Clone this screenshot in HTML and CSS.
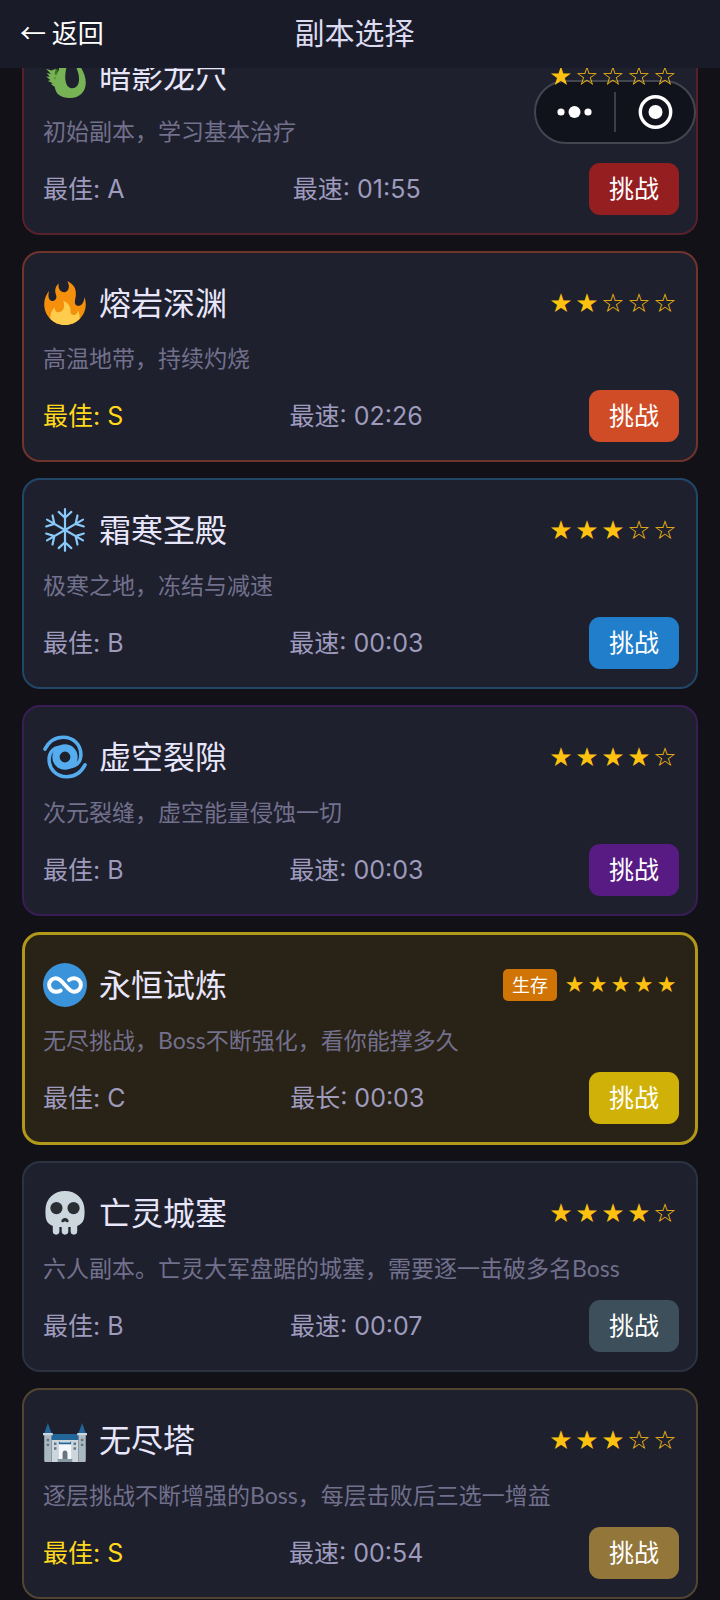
FILE: index.html
```html
<!DOCTYPE html>
<html lang="zh-CN">
<head>
<meta charset="utf-8">
<meta name="viewport" content="width=device-width, initial-scale=1">
<title>副本选择</title>
<link rel="stylesheet" href="styles.css">
</head>
<body>
<header class="topbar">
  <button class="back" type="button">← 返回</button>
  <h1 class="topbar-title">副本选择</h1>
</header>

<div class="capsule">
  <button class="capsule-btn" type="button" aria-label="更多">
    <svg width="36" height="36" viewBox="0 0 36 36" fill="#fff"><circle cx="4" cy="18" r="3.6"/><circle cx="17.500" cy="18" r="6"/><circle cx="31" cy="18" r="3.6"/></svg>
  </button>
  <button class="capsule-btn" type="button" aria-label="关闭">
    <svg width="36" height="36" viewBox="0 0 36 36"><circle cx="18.500" cy="18" r="15.2" fill="none" stroke="#fff" stroke-width="3.4"/><circle cx="18.500" cy="18" r="7" fill="#fff"/></svg>
  </button>
</div>

<main class="list">
  <article class="card card-dragon">
    <div class="head">
      <svg class="icon" viewBox="0 0 36 36"><path fill="#3e721d" d="M7 14l5-2v14l-4-2-3-4z"/><path fill="#77b255" d="M2.500 12l4.500 1.500 3.500-1.500-1 4 1.500 2-2 2 2 2-1.500 5-3-2.500 1.500-.5-4-2 2-.8-3.500-2.700 3 .2-2.500-3.200 3.500.8z"/><path fill="#77b255" d="M13 5v8c-2.500 4-4 8.500-3.500 13 .6 7 5 10 12.500 10 8 0 13-5 13-12.500 0-4.500-1.500-8.500-4-12.500l-2-6z"/><path fill="#1e202e" d="M20 8c-1.200 4-2.300 10-1.500 14 .7 4 2.800 6 5.500 6 3.800 0 5.500-3.500 5.500-7.500 0-5-2-8.500-3.500-12.500z"/></svg>
      <h2 class="name">暗影龙穴</h2>
      <div class="stars"><span>★</span><span>☆</span><span>☆</span><span>☆</span><span>☆</span></div>
    </div>
    <p class="desc">初始副本，学习基本治疗</p>
    <div class="foot"><span>最佳: A</span><span>最速: 01:55</span><button class="go" type="button">挑战</button></div>
  </article>

  <article class="card card-lava">
    <div class="head">
      <svg class="icon" viewBox="0 0 36 36"><path fill="#f4900c" d="M35 19c0-2.062-.367-4.039-1.040-5.868-.46 5.389-3.333 8.157-6.335 6.868-2.812-1.208-.917-5.917-.777-8.164.236-3.809-.012-8.169-6.931-11.794 2.875 5.500.333 8.917-2.333 9.125-2.958.231-5.667-2.542-4.667-7.042-3.238 2.386-3.332 6.402-2.333 9 1.042 2.708-.042 4.958-2.583 5.208-2.840.28-4.418-3.041-2.963-8.333C2.520 10.965 1 14.805 1 19c0 9.389 7.611 17 17 17s17-7.611 17-17z"/><path fill="#ffcc4d" d="M28.394 23.999c.148 3.084-2.561 4.293-4.019 3.709-2.106-.843-1.541-2.291-2.083-5.291s-2.625-5.083-5.708-6c2.250 6.333-1.247 8.667-3.080 9.084-1.872.426-3.753-.001-3.968-4.007C7.352 23.668 6 26.676 6 30c0 .368.023.73.055 1.090C9.125 34.124 13.342 36 18 36s8.875-1.876 11.945-4.910c.032-.36.055-.722.055-1.090 0-2.187-.584-4.236-1.606-6.001z"/></svg>
      <h2 class="name">熔岩深渊</h2>
      <div class="stars"><span>★</span><span>★</span><span>☆</span><span>☆</span><span>☆</span></div>
    </div>
    <p class="desc">高温地带，持续灼烧</p>
    <div class="foot"><span class="best-s">最佳: S</span><span>最速: 02:26</span><button class="go" type="button">挑战</button></div>
  </article>

  <article class="card card-frost">
    <div class="head">
      <svg class="icon" viewBox="0 0 36 36" fill="none" stroke="#88c9f9" stroke-width="1.8" stroke-linecap="round" stroke-linejoin="round"><defs><path id="arm" d="M18 18V1M12.800 3.200L18 8l5.200-4.800"/></defs><use href="#arm"/><use href="#arm" transform="rotate(60 18 18)"/><use href="#arm" transform="rotate(120 18 18)"/><use href="#arm" transform="rotate(180 18 18)"/><use href="#arm" transform="rotate(240 18 18)"/><use href="#arm" transform="rotate(300 18 18)"/></svg>
      <h2 class="name">霜寒圣殿</h2>
      <div class="stars"><span>★</span><span>★</span><span>★</span><span>☆</span><span>☆</span></div>
    </div>
    <p class="desc">极寒之地，冻结与减速</p>
    <div class="foot"><span>最佳: B</span><span>最速: 00:03</span><button class="go" type="button">挑战</button></div>
  </article>

  <article class="card card-void">
    <div class="head">
      <svg class="icon" viewBox="0 0 36 36" fill="none" stroke="#55acee" stroke-linecap="round"><circle cx="18" cy="18" r="7.400" stroke-width="6"/><g stroke-width="2.900"><path d="M1.600 11.500C5 5 10 1.800 16.500 1.800C25 1.800 31 8 31 16C31 21.500 28 25.500 22 26"/><path d="M34.400 24.500C31 31 26 34.200 19.500 34.200C11 34.200 5 28 5 20C5 14.500 8 10.500 14 10"/></g></svg>
      <h2 class="name">虚空裂隙</h2>
      <div class="stars"><span>★</span><span>★</span><span>★</span><span>★</span><span>☆</span></div>
    </div>
    <p class="desc">次元裂缝，虚空能量侵蚀一切</p>
    <div class="foot"><span>最佳: B</span><span>最速: 00:03</span><button class="go" type="button">挑战</button></div>
  </article>

  <article class="card card-survival">
    <div class="head">
      <svg class="icon" viewBox="0 0 36 36"><circle cx="18" cy="18" r="18" fill="#3b94d9"/><path d="M14.500 22.500C13 23.400 11.600 23.500 10.500 23.500A5.500 5.500 0 0 1 10.500 12.500C16.500 12.500 19.500 23.500 25.500 23.500A5.500 5.500 0 0 0 25.500 12.500C24 12.500 22.500 13 21.300 14" fill="none" stroke="#fff" stroke-width="3.200" stroke-linecap="round"/></svg>
      <h2 class="name">永恒试炼</h2>
      <span class="badge">生存</span>
      <div class="stars stars-small"><span>★</span><span>★</span><span>★</span><span>★</span><span>★</span></div>
    </div>
    <p class="desc">无尽挑战，Boss不断强化，看你能撑多久</p>
    <div class="foot"><span>最佳: C</span><span>最长: 00:03</span><button class="go" type="button">挑战</button></div>
  </article>

  <article class="card card-undead">
    <div class="head">
      <svg class="icon" viewBox="0 0 36 36"><path fill="#ccd6dd" d="M34 16C34 6 26.800 0 18 0S2 6 2 16c0 5.600 0 10.400 6 12.600V33a2.700 2.700 0 0 0 5.400 0v-3.500h1.900V33a2.700 2.700 0 0 0 5.400 0v-3.500h1.900V33a2.700 2.700 0 0 0 5.400 0v-4.400C34 26.400 34 21.600 34 16z"/><circle cx="11" cy="14" r="5" fill="#292f33"/><circle cx="25" cy="14" r="5" fill="#292f33"/><path fill="#292f33" d="M18 22c1.700 0 3 1.300 3 2.600s-1.600 1.300-3 .2c-1.400 1.100-3 1.100-3-.2S16.300 22 18 22z"/></svg>
      <h2 class="name">亡灵城塞</h2>
      <div class="stars"><span>★</span><span>★</span><span>★</span><span>★</span><span>☆</span></div>
    </div>
    <p class="desc">六人副本。亡灵大军盘踞的城塞，需要逐一击破多名Boss</p>
    <div class="foot"><span>最佳: B</span><span>最速: 00:07</span><button class="go" type="button">挑战</button></div>
  </article>

  <article class="card card-tower">
    <div class="head">
      <svg class="icon" viewBox="0 0 36 36"><path fill="#226699" d="M4 4l3 8.500H1zM32 4l3 8.500h-6zM7 13h22v6H7z"/><path fill="#ccd6dd" d="M7 18h22v18H7z"/><path fill="#aab8c2" d="M1 14h6v22H2q-1 0-1-1zM29 14h6v21q0 1-1 1h-5z"/><path fill="#ccd6dd" d="M0 12.200h8v2H0zM28 12.200h8v2h-8z"/><path fill="#f5f8fa" d="M13 20h10v14H13z"/><path fill="#226699" d="M13 19l1 1h8l1-1v2.500H13z"/><path fill="#66757f" d="M16 34v-5a2 2.500 0 0 1 4 0v5zM3 17h2v2H3zM3 21h2v2H3zM31 17h2v2h-2zM31 21h2v2h-2zM9 20h2v2H9zM9 24h2v2H9zM25 20h2v2h-2zM25 24h2v2h-2z"/><path fill="#8899a6" d="M12 33.500h12V36H12z"/></svg>
      <h2 class="name">无尽塔</h2>
      <div class="stars"><span>★</span><span>★</span><span>★</span><span>☆</span><span>☆</span></div>
    </div>
    <p class="desc">逐层挑战不断增强的Boss，每层击败后三选一增益</p>
    <div class="foot"><span class="best-s">最佳: S</span><span>最速: 00:54</span><button class="go" type="button">挑战</button></div>
  </article>
</main>
</body>
</html>
```

FILE: styles.css
```css
* { box-sizing: border-box; }

body {
  margin: 0;
  background: #121117;
  color: #e8e6fa;
  font-family: Lato, "Noto Sans CJK SC", sans-serif;
}

h1, h2, p { margin: 0; font-weight: 400; }

button {
  border: 0;
  margin: 0;
  color: #fff;
  font-family: inherit;
  cursor: pointer;
}

.topbar {
  position: fixed;
  top: 0;
  left: 0;
  right: 0;
  z-index: 4;
  display: grid;
  grid-template-columns: 1fr auto 1fr;
  align-items: center;
  height: 68px;
  padding: 0 31px 4px 20px;
  background: #1a1b28;
}

.back {
  justify-self: start;
  padding: 0;
  background: none;
  font-family: "Noto Sans CJK SC", sans-serif;
  font-size: 26px;
  line-height: 40px;
}

.topbar-title {
  color: #dddbf2;
  font-size: 30px;
  line-height: 44px;
}

.capsule {
  position: fixed;
  top: 80px;
  right: 24px;
  z-index: 2;
  display: flex;
  align-items: center;
  width: 162px;
  height: 64px;
  border: 2px solid #44464f;
  border-radius: 32px;
  background: #10131b;
}

.capsule-btn {
  flex: 1;
  display: flex;
  align-items: center;
  justify-content: center;
  height: 40px;
  padding: 0;
  background: none;
}

.capsule-btn + .capsule-btn { border-left: 2px solid #3c3e47; }

.list {
  display: flex;
  flex-direction: column;
  gap: 16px;
  padding: 24px 22px 0;
}

.card {
  --accent: #951e20;
  --edge: #57202a;
  padding: 18px 17px 18px 19px;
  border: 2px solid var(--edge);
  border-radius: 18px;
  background: #1e202e;
}

.card-lava { --accent: #cf4c26; --edge: #6f342c; }
.card-frost { --accent: #217ecb; --edge: #204768; }
.card-void { --accent: #581b84; --edge: #391d54; }
.card-survival {
  --accent: #d0b107;
  --edge: #b1981a;
  padding-right: 16px;
  padding-left: 18px;
  border-width: 3px;
  background: #292217;
}
.card-undead { --accent: #3d4f5a; --edge: #2b3340; }
.card-tower { --accent: #92763a; --edge: #514532; }

.head {
  display: flex;
  align-items: center;
  height: 64px;
}

.icon {
  flex: none;
  width: 44px;
  height: 44px;
  margin-right: 12px;
}

.name {
  flex: 1;
  font-size: 32px;
  line-height: 44px;
}

.badge {
  margin-right: 6px;
  padding: 0 9px;
  border-radius: 5px;
  background: #cf7405;
  color: #fff;
  font-size: 18px;
  line-height: 32px;
}

.stars {
  position: relative;
  z-index: 3;
  display: grid;
  grid-template-columns: repeat(5, 26px);
  padding-right: 1px;
  color: #ffc110;
  font-family: "DejaVu Sans", sans-serif;
  font-size: 26px;
  line-height: 32px;
  text-align: center;
}

.stars-small {
  grid-template-columns: repeat(5, 23px);
  font-size: 22px;
}

.desc {
  margin: 6px 0 15px;
  color: #72708c;
  font-size: 23px;
  line-height: 34px;
}

.foot {
  display: flex;
  align-items: center;
  justify-content: space-between;
  color: #9e9bbd;
  font-family: Inter, "Noto Sans CJK SC", sans-serif;
  font-size: 25px;
  line-height: 36px;
}

.best-s { color: #ffd91a; }

.go {
  padding: 8px 20px;
  border-radius: 11px;
  background: var(--accent);
  font-size: 25px;
  line-height: 36px;
}
```
